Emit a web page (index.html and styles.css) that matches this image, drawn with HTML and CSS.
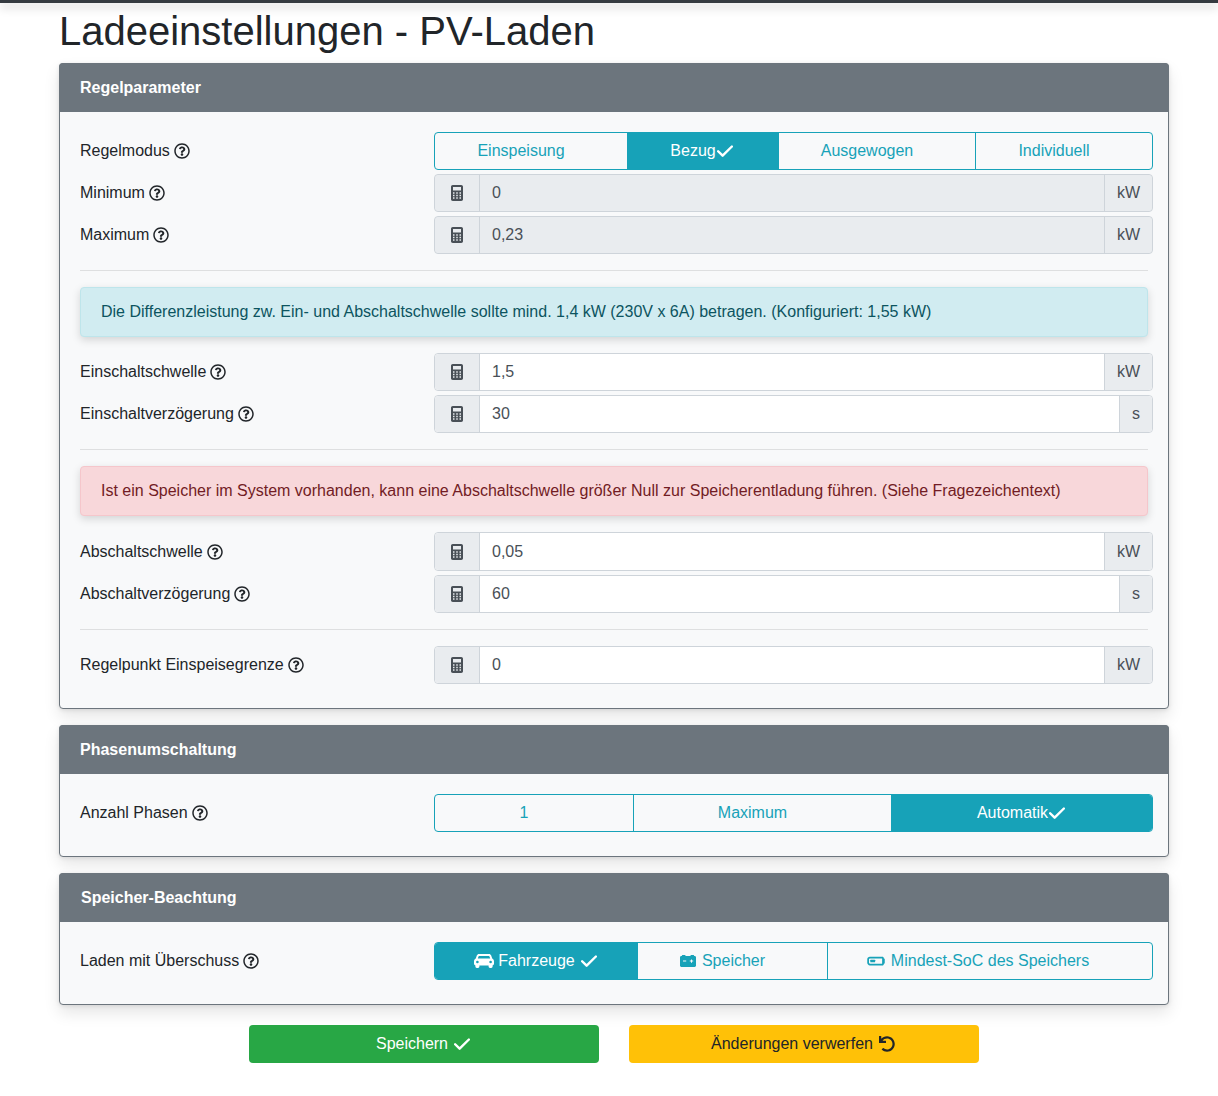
FILE: index.html
```html
<!DOCTYPE html>
<html lang="de">
<head>
<meta charset="utf-8">
<title>Ladeeinstellungen - PV-Laden</title>
<link rel="stylesheet" href="styles.css">
</head>
<body>
<svg class="defs" width="0" height="0" aria-hidden="true">
  <symbol id="q" viewBox="0 0 512 512"><path d="M256 8C119 8 8 119.08 8 256c0 137 111 248 248 248s248-111 248-248C504 119.08 393 8 256 8zm0 448c-110.53 0-200-89.43-200-200 0-110.5 89.47-200 200-200 110.53 0 200 89.43 200 200 0 110.53-89.43 200-200 200zm107.244-255.2c0 67.052-72.421 68.084-72.421 92.863V300c0 6.627-5.373 12-12 12h-45.647c-6.627 0-12-5.373-12-12v-8.659c0-35.745 27.1-50.034 47.579-61.516 17.561-9.845 28.324-16.541 28.324-29.579 0-17.246-21.999-28.693-39.784-28.693-23.189 0-33.894 10.977-48.942 29.969-4.057 5.12-11.46 6.071-16.666 2.124l-27.824-21.098c-5.107-3.872-6.251-11.066-2.644-16.363C184.846 131.491 214.94 112 261.794 112c49.071 0 101.45 38.304 101.45 88.8zM298 368c0 23.159-18.841 42-42 42s-42-18.841-42-42 18.841-42 42-42 42 18.841 42 42z"/></symbol>
  <symbol id="calc" viewBox="0 0 384 512"><path fill-rule="evenodd" d="M56 0h272c31 0 56 25 56 56v400c0 31-25 56-56 56H56c-31 0-56-25-56-56V56C0 25 25 0 56 0zM64 64v112h256V64zM64 232v48h48v-48zM168 232v48h48v-48zM272 232v48h48v-48zM64 312v48h48v-48zM168 312v48h48v-48zM272 312v48h48v-48zM64 392v48h48v-48zM168 392v48h48v-48zM272 392v48h48v-48z"/></symbol>
  <symbol id="check" viewBox="0 0 512 512"><polyline points="36,264 180,406 476,112" fill="none" stroke="currentColor" stroke-width="78" stroke-linecap="round" stroke-linejoin="round"/></symbol>
  <symbol id="car" viewBox="0 0 200 140"><path fill-rule="evenodd" d="M50 0H150C160 0 168 6 172 16L182 46C194 52 200 62 200 76V96C200 106 194 112 186 114V126C186 134 180 140 172 140H160C152 140 146 134 146 126V114H54V126C54 134 48 140 40 140H28C20 140 14 134 14 126V114C6 112 0 106 0 96V76C0 62 6 52 18 46L28 16C32 6 40 0 50 0ZM52 20C48 20 46 22 45 26L38 46H162L155 26C154 22 152 20 148 20ZM21 80a13 13 0 1 0 26 0a13 13 0 1 0-26 0ZM153 80a13 13 0 1 0 26 0a13 13 0 1 0-26 0Z"/></symbol>
  <symbol id="battery" viewBox="0 0 160 120"><path fill-rule="evenodd" d="M24 0H50C53 0 55 2 55 5V10H105V5C105 2 107 0 110 0H136C139 0 141 2 141 5V10H146C154 10 160 16 160 24V106C160 114 154 120 146 120H14C6 120 0 114 0 106V24C0 16 6 10 14 10H19V5C19 2 21 0 24 0ZM30 56V66H62V56ZM98 56V66H110V78H120V66H132V56H120V44H110V56Z"/></symbol>
  <symbol id="quarter" viewBox="0 0 640 512"><path fill-rule="evenodd" d="M96 96h448c44 0 64 24 64 64h8c13 0 24 11 24 24v144c0 13-11 24-24 24h-8c0 40-20 64-64 64H96c-53 0-96-43-96-96V192c0-53 43-96 96-96zM96 160c-18 0-32 14-32 32v128c0 18 14 32 32 32h448V160z"/><rect x="112" y="208" width="176" height="96" rx="16"/></symbol>
  <symbol id="undo" viewBox="0 0 512 512"><path d="M212.333 224.333H12c-6.627 0-12-5.373-12-12V12C0 5.373 5.373 0 12 0h48c6.627 0 12 5.373 12 12v78.112C117.773 39.279 184.26 7.47 258.175 8.007c136.906.994 246.448 111.623 246.157 248.532C504.041 393.258 393.12 504 256.333 504c-64.089 0-122.496-24.313-166.51-64.215-5.099-4.622-5.334-12.554-.467-17.42l33.967-33.967c4.474-4.474 11.662-4.717 16.401-.525C170.76 415.336 211.58 432 256.333 432c97.268 0 176-78.716 176-176 0-97.267-78.716-176-176-176-58.496 0-110.28 28.476-142.274 72.333h98.274c6.627 0 12 5.373 12 12v48c0 6.627-5.373 12-12 12z"/></symbol>
</svg>
<div class="topbar"></div>
<main class="container">
  <h1 class="title">Ladeeinstellungen - PV-Laden</h1>

  <section class="card">
    <h2 class="card-header">Regelparameter</h2>
    <div class="card-body">
      <div class="row">
        <div class="label">Regelmodus <svg class="ico-q"><use href="#q"/></svg></div>
        <div class="seg seg-modus">
          <div class="seg-btn">Einspeisung</div>
          <div class="seg-btn on">Bezug<svg class="ico-check"><use href="#check"/></svg></div>
          <div class="seg-btn">Ausgewogen</div>
          <div class="seg-btn">Individuell</div>
        </div>
      </div>
      <div class="row">
        <div class="label">Minimum <svg class="ico-q"><use href="#q"/></svg></div>
        <div class="igroup disabled"><span class="addon pre"><svg class="ico-calc"><use href="#calc"/></svg></span><span class="value">0</span><span class="addon post">kW</span></div>
      </div>
      <div class="row">
        <div class="label">Maximum <svg class="ico-q"><use href="#q"/></svg></div>
        <div class="igroup disabled"><span class="addon pre"><svg class="ico-calc"><use href="#calc"/></svg></span><span class="value">0,23</span><span class="addon post">kW</span></div>
      </div>
      <hr class="rule">
      <div class="alert info">Die Differenzleistung zw. Ein- und Abschaltschwelle sollte mind. 1,4 kW (230V x 6A) betragen. (Konfiguriert: 1,55 kW)</div>
      <div class="row">
        <div class="label">Einschaltschwelle <svg class="ico-q"><use href="#q"/></svg></div>
        <div class="igroup"><span class="addon pre"><svg class="ico-calc"><use href="#calc"/></svg></span><span class="value">1,5</span><span class="addon post">kW</span></div>
      </div>
      <div class="row">
        <div class="label">Einschaltverzögerung <svg class="ico-q"><use href="#q"/></svg></div>
        <div class="igroup"><span class="addon pre"><svg class="ico-calc"><use href="#calc"/></svg></span><span class="value">30</span><span class="addon post">s</span></div>
      </div>
      <hr class="rule">
      <div class="alert danger">Ist ein Speicher im System vorhanden, kann eine Abschaltschwelle größer Null zur Speicherentladung führen. (Siehe Fragezeichentext)</div>
      <div class="row tall">
        <div class="label">Abschaltschwelle <svg class="ico-q"><use href="#q"/></svg></div>
        <div class="igroup"><span class="addon pre"><svg class="ico-calc"><use href="#calc"/></svg></span><span class="value">0,05</span><span class="addon post">kW</span></div>
      </div>
      <div class="row">
        <div class="label">Abschaltverzögerung <svg class="ico-q"><use href="#q"/></svg></div>
        <div class="igroup"><span class="addon pre"><svg class="ico-calc"><use href="#calc"/></svg></span><span class="value">60</span><span class="addon post">s</span></div>
      </div>
      <hr class="rule">
      <div class="row">
        <div class="label">Regelpunkt Einspeisegrenze <svg class="ico-q"><use href="#q"/></svg></div>
        <div class="igroup"><span class="addon pre"><svg class="ico-calc"><use href="#calc"/></svg></span><span class="value">0</span><span class="addon post">kW</span></div>
      </div>
    </div>
  </section>

  <section class="card">
    <h2 class="card-header">Phasenumschaltung</h2>
    <div class="card-body">
      <div class="row">
        <div class="label">Anzahl Phasen <svg class="ico-q"><use href="#q"/></svg></div>
        <div class="seg seg-phasen">
          <div class="seg-btn">1</div>
          <div class="seg-btn">Maximum</div>
          <div class="seg-btn on">Automatik<svg class="ico-check"><use href="#check"/></svg></div>
        </div>
      </div>
    </div>
  </section>

  <section class="card">
    <h2 class="card-header nudge">Speicher-Beachtung</h2>
    <div class="card-body">
      <div class="row">
        <div class="label">Laden mit Überschuss <svg class="ico-q"><use href="#q"/></svg></div>
        <div class="seg seg-speicher">
          <div class="seg-btn on"><svg class="ico-car"><use href="#car"/></svg> Fahrzeuge <svg class="ico-check spaced"><use href="#check"/></svg></div>
          <div class="seg-btn"><svg class="ico-battery"><use href="#battery"/></svg> Speicher</div>
          <div class="seg-btn wide"><svg class="ico-quarter"><use href="#quarter"/></svg> Mindest-SoC des Speichers</div>
        </div>
      </div>
    </div>
  </section>

  <div class="actions">
    <button class="btn save">Speichern <svg class="ico-check"><use href="#check"/></svg></button>
    <button class="btn revert">Änderungen verwerfen <svg class="ico-undo"><use href="#undo"/></svg></button>
  </div>
</main>
</body>
</html>
```

FILE: styles.css
```css
* { box-sizing: border-box; }
html, body { margin: 0; padding: 0; }
body {
  background: #fff;
  color: #212529;
  font-family: "Liberation Sans", Arial, sans-serif;
  font-size: 16px;
  line-height: 24px;
}
.defs { position: absolute; }
svg { fill: currentColor; display: inline-block; }
.topbar {
  height: 3px;
  background: #343a40;
  box-shadow: 0 4px 10px rgba(0, 0, 0, 0.25);
}
.container { width: 1110px; margin-left: 59px; }
.title {
  margin: 2px 0 6px;
  font-size: 40px;
  font-weight: 400;
  line-height: 52px;
  height: 52px;
}
.card {
  background: #f8f9fa;
  border: 1px solid #6c757d;
  border-radius: 4px;
  box-shadow: 0 8px 16px rgba(0, 0, 0, 0.1), 0 1px 4px rgba(0, 0, 0, 0.1);
  margin-bottom: 16px;
}
.card-header {
  margin: -1px -1px 0;
  height: 49px;
  padding: 13px 21px 11px;
  background: #6c757d;
  color: #fff;
  font-size: 16px;
  font-weight: 700;
  line-height: 24px;
  border-radius: 4px 4px 0 0;
}
.card-header.nudge { padding-left: 22px; }
.card-body { padding: 20px 15px 24px 20px; }
.row {
  display: grid;
  grid-template-columns: 354px 719px;
  align-items: center;
  margin-bottom: 4px;
}
.row:last-child { margin-bottom: 0; }
.row.tall .igroup { height: 39px; }
.label { display: flex; align-items: center; gap: 4px; height: 38px; white-space: nowrap; }
.ico-q { width: 16px; height: 16px; }
.seg {
  display: grid;
  height: 38px;
  border: 1px solid #17a2b8;
  border-radius: 4px;
  overflow: hidden;
  color: #17a2b8;
}
.seg-modus { grid-template-columns: 192px 151px 197px 1fr; }
.seg-phasen { grid-template-columns: 198px 258px 1fr; }
.seg-speicher { grid-template-columns: 202px 190px 1fr; }
.seg-btn {
  display: flex;
  align-items: center;
  justify-content: center;
  gap: 4px;
  padding-right: 20px;
  border-left: 1px solid #17a2b8;
  white-space: nowrap;
}
.seg-btn:first-child { border-left: 0; }
.seg-btn.wide { padding-right: 24px; }
.seg-btn.on {
  background: #17a2b8;
  color: #fff;
  margin: -1px 0;
  padding-right: 3px;
  gap: 1px;
}
.seg-btn.on:first-child { margin-left: -1px; gap: 4px; padding-right: 0; }
.seg-btn.on:last-child { margin-right: -1px; }
.ico-check { width: 16px; height: 16px; }
.ico-check.spaced { margin-left: 2px; }
.ico-car { width: 20px; height: 14px; }
.ico-battery { width: 16px; height: 12px; margin-right: 2px; }
.ico-quarter { width: 18px; height: 14px; margin-right: 2px; }
.ico-undo { width: 16px; height: 16px; }
.ico-calc { width: 12px; height: 16px; color: #495057; }
.igroup {
  display: flex;
  height: 38px;
  color: #495057;
  background: #fff;
  border: 1px solid #ced4da;
  border-radius: 4px;
}
.igroup.disabled { background: #e9ecef; }
.addon {
  display: flex;
  align-items: center;
  justify-content: center;
  background: #e9ecef;
  padding: 0 12px;
}
.addon.pre { width: 45px; border-right: 1px solid #ced4da; border-radius: 4px 0 0 4px; }
.addon.post { border-left: 1px solid #ced4da; border-radius: 0 4px 4px 0; }
.value { flex: 1; display: flex; align-items: center; padding: 0 12px; }
.rule {
  width: 1068px;
  margin: 16px 0;
  border: 0;
  border-top: 1px solid rgba(0, 0, 0, 0.1);
}
.alert {
  width: 1068px;
  height: 50px;
  margin-bottom: 16px;
  padding: 12px 20px;
  border: 1px solid;
  border-radius: 4px;
  box-shadow: 0 3px 8px rgba(0, 0, 0, 0.15);
  white-space: nowrap;
}
.alert.info { background: #d1ecf1; border-color: #bee5eb; color: #0c5460; }
.alert.danger { background: #f8d7da; border-color: #f5c6cb; color: #721c24; }
.actions {
  display: grid;
  grid-template-columns: 350px 350px;
  justify-content: center;
  gap: 30px;
  margin-top: 20px;
}
.btn {
  display: flex;
  align-items: center;
  justify-content: center;
  gap: 6px;
  height: 38px;
  padding: 0 2px 0 0;
  border: 0;
  border-radius: 4px;
  font: inherit;
}
.btn.save { background: #28a745; color: #fff; }
.btn.revert { background: #ffc107; color: #212529; }
```
